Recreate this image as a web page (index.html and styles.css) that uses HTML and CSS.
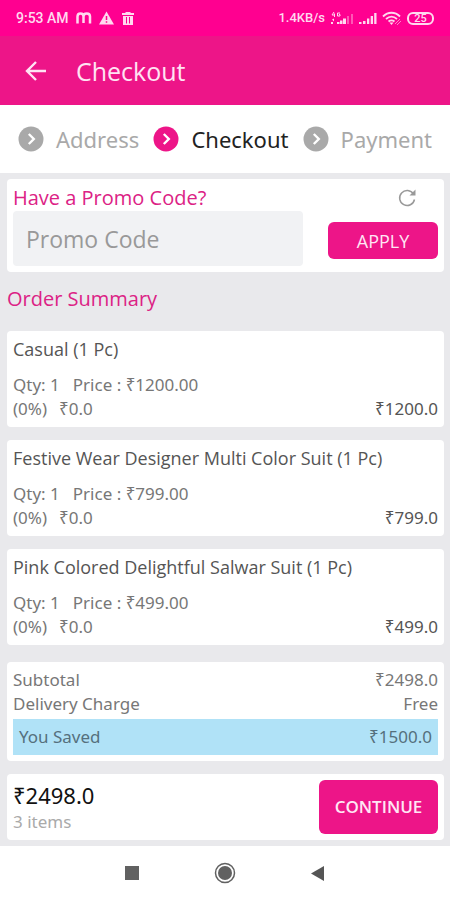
FILE: index.html
```html
<!DOCTYPE html>
<html lang="en">
<head>
<meta charset="utf-8">
<meta name="viewport" content="width=device-width, initial-scale=1">
<title>Checkout</title>
<link rel="stylesheet" href="styles.css">
</head>
<body>
<div class="status">
  <div class="status-group status-left">
    <span>9:53 AM</span>
    <svg width="16" height="14" viewBox="0 0 16 14"><path d="M1.500 12.500V5.500C1.500 1.500 7.500 1.500 7.500 5.500V12M7.500 5.500C7.500 1.500 14 1.500 14 5.500V12.500" fill="none" stroke="currentColor" stroke-width="2.500"/></svg>
    <svg width="15" height="14" viewBox="0 0 15 14"><path d="M7.500 0.500L15 13.500H0Z" fill="currentColor"/><path d="M7.500 5v4M7.500 10.200v1.600" stroke="#ff0090" stroke-width="1.500"/></svg>
    <svg width="14" height="15" viewBox="0 0 14 15"><path d="M4.500 2V1h5v1H13v2H1V2ZM2 5h10v9H2Z" fill="currentColor"/><path d="M5.500 6v6.500M8.500 6v6.500" stroke="#ff0090" stroke-width="1"/></svg>
  </div>
  <div class="status-group status-right">
    <span class="speed">1.4KB/s</span>
    <svg width="24" height="15" viewBox="0 0 24 15"><g fill="currentColor"><path d="M1 13v-2h2v2ZM2 8.500l2-1v3ZM7 13v-2h2.500v2ZM10 13V9.500h2.500V13ZM13 13V7.500h3V13Z"/><path d="M17 13V5h2v8ZM21 13V3h2v10Z" opacity=".4"/></g><path d="M4 1L2 4h3M4.500 2.500V6M10 2H7.500v3H10V3.500H9" fill="none" stroke="currentColor"/></svg>
    <svg width="18" height="13" viewBox="0 0 18 13"><path d="M0 12v-2h2.500v2ZM4 12V9h2.500v3ZM8 12V6.500h2.300V12ZM11.700 12V4H14v8ZM15.200 12V1h2.300v11Z" fill="currentColor"/></svg>
    <svg width="20" height="15" viewBox="0 0 20 15"><path d="M1 5.500C6 .5 13 .5 18 5.500M4 8C7.500 5 11.500 5 15 8M6.500 10.500C8.500 9 10.500 9 12.500 10.500" fill="none" stroke="currentColor" stroke-width="1.800"/><path d="M7.500 11.500h4L9.500 14Z" fill="currentColor"/><path d="M13 13l5-5M15 14l4-4" stroke="currentColor" opacity=".6"/></svg>
    <span class="battery">25</span>
  </div>
</div>

<header class="appbar">
  <button class="back" type="button" aria-label="Back"><svg width="22" height="22" viewBox="0 0 22 22"><path d="M21 11H2.500M11 2L2 11l9 9" fill="none" stroke="currentColor" stroke-width="2.400"/></svg></button>
  <h1>Checkout</h1>
</header>

<nav class="steps" aria-label="Checkout steps">
  <a href="#address" class="step"><svg width="26" height="26" viewBox="0 0 26 26"><circle cx="13" cy="13" r="12.500" fill="#a9a9a9"/><path d="M10.800 8l5 5-5 5" fill="none" stroke="#fff" stroke-width="2.400"/></svg>Address</a>
  <a href="#checkout" class="step current" aria-current="step"><svg width="26" height="26" viewBox="0 0 26 26"><circle cx="13" cy="13" r="12.500" fill="#ed1588"/><path d="M10.800 8l5 5-5 5" fill="none" stroke="#fff" stroke-width="2.400"/></svg>Checkout</a>
  <a href="#payment" class="step"><svg width="26" height="26" viewBox="0 0 26 26"><circle cx="13" cy="13" r="12.500" fill="#a9a9a9"/><path d="M10.800 8l5 5-5 5" fill="none" stroke="#fff" stroke-width="2.400"/></svg>Payment</a>
</nav>

<main class="content">
  <form class="card promo">
    <div class="promo-field">
      <label for="promo">Have a Promo Code?</label>
      <input id="promo" type="text" placeholder="Promo Code">
    </div>
    <div class="promo-actions">
      <button class="refresh" type="button" aria-label="Refresh"><svg width="20" height="20" viewBox="0 0 20 20"><path d="M16.500 6A7.500 7.500 0 1 0 17.500 11.500" fill="none" stroke="currentColor" stroke-width="1.500"/><path d="M18.500 1.500v6h-6Z" fill="currentColor"/></svg></button>
      <button class="primary apply" type="button">APPLY</button>
    </div>
  </form>

  <h2>Order Summary</h2>

  <ul class="items">
    <li class="card item">
      <h3>Casual (1 Pc)</h3>
      <p class="row"><span class="qty">Qty: 1</span><span>Price : ₹1200.00</span></p>
      <p class="row"><span class="off">(0%)</span><span>₹0.0</span><span class="sum">₹1200.0</span></p>
    </li>
    <li class="card item">
      <h3>Festive Wear Designer Multi Color Suit (1 Pc)</h3>
      <p class="row"><span class="qty">Qty: 1</span><span>Price : ₹799.00</span></p>
      <p class="row"><span class="off">(0%)</span><span>₹0.0</span><span class="sum">₹799.0</span></p>
    </li>
    <li class="card item">
      <h3>Pink Colored Delightful Salwar Suit (1 Pc)</h3>
      <p class="row"><span class="qty">Qty: 1</span><span>Price : ₹499.00</span></p>
      <p class="row"><span class="off">(0%)</span><span>₹0.0</span><span class="sum">₹499.0</span></p>
    </li>
  </ul>

  <dl class="card totals">
    <div class="line"><dt>Subtotal</dt><dd>₹2498.0</dd></div>
    <div class="line"><dt>Delivery Charge</dt><dd>Free</dd></div>
    <div class="line saved"><dt>You Saved</dt><dd>₹1500.0</dd></div>
  </dl>

  <section class="card pay">
    <div>
      <p class="grand">₹2498.0</p>
      <p class="count">3 items</p>
    </div>
    <button class="primary continue" type="button">CONTINUE</button>
  </section>
</main>

<div class="sysnav">
  <button type="button" aria-label="Recent apps"><svg width="22" height="22" viewBox="0 0 22 22"><path d="M4 4h14v14H4Z" fill="#616161"/></svg></button>
  <button type="button" aria-label="Home"><svg width="22" height="22" viewBox="0 0 22 22"><circle cx="11" cy="11" r="9.500" fill="none" stroke="#616161" stroke-width="1.500"/><circle cx="11" cy="11" r="7" fill="#616161"/></svg></button>
  <button type="button" aria-label="System back"><svg width="22" height="22" viewBox="0 0 22 22"><path d="M17 4v15L4 11.500Z" fill="#555"/></svg></button>
</div>
</body>
</html>
```
FILE: styles.css
```css
* { box-sizing: border-box; }

body {
  margin: 0;
  min-height: 100vh;
  display: flex;
  flex-direction: column;
  background: #e9e9ec;
  color: #777;
  font-family: "Noto Sans", "Open Sans", sans-serif;
  font-size: 17px;
  line-height: 24px;
}

h1, h2, h3, p, ul, dl, dd { margin: 0; padding: 0; font-weight: 400; }
ul { list-style: none; }
svg { display: block; flex: none; }
button { border: 0; padding: 0; background: none; color: inherit; font: inherit; }
h1, h2, h3, label, input, .primary { font-family: "Open Sans", sans-serif; }

.status {
  display: flex;
  justify-content: space-between;
  height: 36px;
  padding: 0 16px;
  background: #ff0090;
  color: #ffd9ef;
  font: 500 14px/36px Roboto, sans-serif;
}
.status-group { display: flex; align-items: center; }
.status-left { gap: 7px; }
.status-right { gap: 5px; }
.speed { font-size: 13px; }
.battery {
  width: 27px;
  height: 13px;
  border: 2px solid currentColor;
  border-radius: 6px;
  font-size: 11px;
  line-height: 9px;
  text-align: center;
}

.appbar {
  display: flex;
  align-items: center;
  gap: 29px;
  height: 69px;
  padding: 0 25px;
  background: #ed1588;
  color: #ffe3f3;
}
h1 { font-size: 25px; line-height: 32px; }

.steps {
  display: flex;
  align-items: center;
  justify-content: space-between;
  height: 68px;
  padding: 0 18px;
  background: #fff;
}
.step {
  display: flex;
  align-items: center;
  gap: 12px;
  color: #a9a9a9;
  font-size: 22px;
  line-height: 32px;
  text-decoration: none;
}
.current { color: #222; }

.content { flex: 1; padding: 6px 6px 5px 7px; }
.card {
  padding: 6px;
  border-radius: 4px;
  background: #fff;
}

.promo { display: flex; justify-content: space-between; gap: 25px; }
.promo-field { flex: 1; min-width: 0; }
.promo label, h2 { color: #dc2285; font-size: 20px; line-height: 26px; }
.promo label { display: block; }
.promo input {
  display: block;
  width: 100%;
  height: 55px;
  padding: 0 13px;
  border: 0;
  border-radius: 4px;
  background: #f1f2f4;
  color: #555;
  font-size: 23px;
}
.promo input::placeholder { color: #999; opacity: 1; }
.promo-actions {
  width: 110px;
  display: flex;
  flex-direction: column;
  align-items: center;
  gap: 14px;
  padding-top: 3px;
}
.refresh { align-self: flex-end; margin-right: 21px; color: #999; }
.primary { border-radius: 6px; background: #ed1588; color: #ffe6f4; }
.apply { width: 100%; height: 37px; font-size: 18px; }

h2 { padding: 14px 0 19px; }

.items { display: grid; gap: 13px; }
h3 { margin-bottom: 12px; color: #555; font-size: 18px; line-height: 24px; }
.row { display: flex; }
.qty { margin-right: 13px; }
.off { margin-right: 12px; }
.sum { margin-left: auto; color: #555; }

.totals { margin: 17px 0 13px; }
.line { display: flex; justify-content: space-between; }
.saved {
  margin-top: 3px;
  padding: 6px;
  background: #b0e2f7;
  color: #55707d;
}

.pay { display: flex; justify-content: space-between; align-items: center; }
.grand { color: #111; font-size: 22px; line-height: 30px; }
.count { color: #aaa; }
.continue { width: 119px; height: 54px; font-size: 17px; font-weight: 600; }

.sysnav {
  display: flex;
  justify-content: center;
  align-items: center;
  gap: 71px;
  height: 54px;
  background: #fff;
}
```
